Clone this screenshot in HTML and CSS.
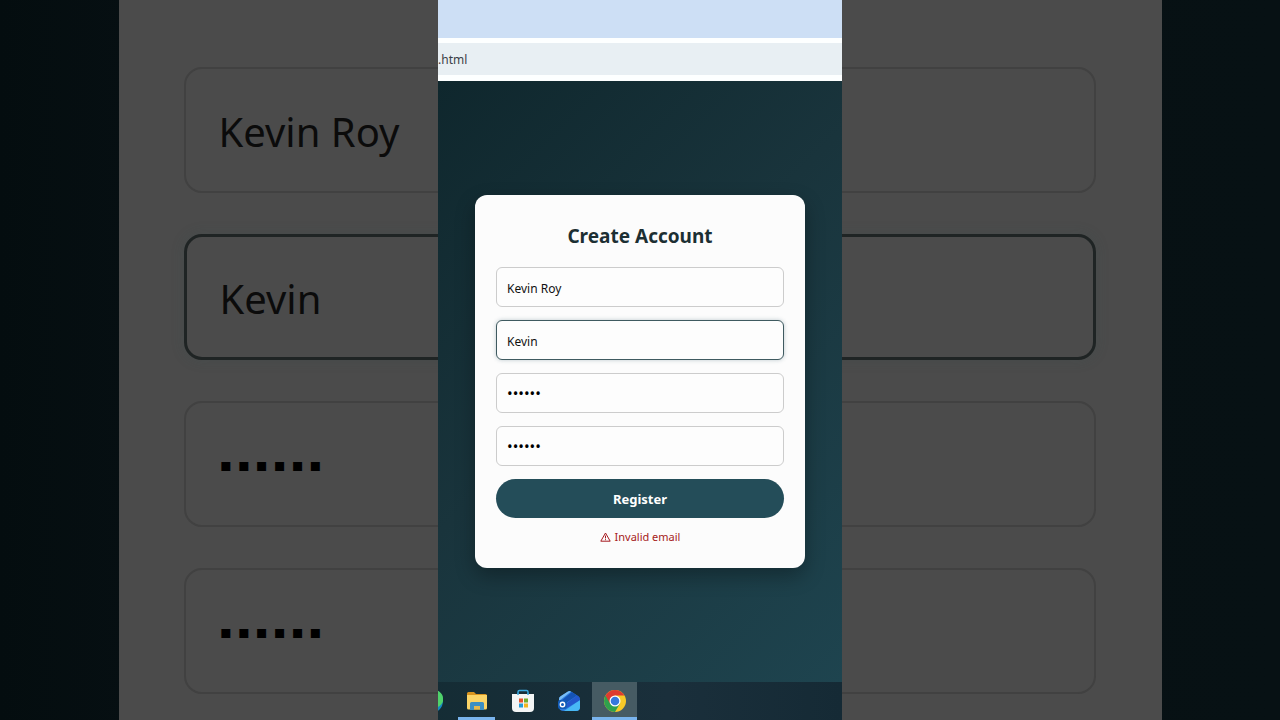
FILE: index.html
```
<!DOCTYPE html>
<html lang="en">
<head>
	<meta charset="UTF-8">
	<title>Create Account</title>
	<link rel="stylesheet" href="styles.css">
</head>
<body>
	<!-- enlarged, dimmed copy of the form -->
	<div class="backdrop" aria-hidden="true">
		<div class="backdrop-card">
			<input class="backdrop-field" type="text" value="Kevin Roy" aria-label="Name" tabindex="-1" readonly>
			<input class="backdrop-field active" type="text" value="Kevin" aria-label="Email" tabindex="-1" readonly>
			<input class="backdrop-field masked" type="text" value="▪ ▪ ▪ ▪ ▪ ▪" aria-label="Password" tabindex="-1" readonly>
			<input class="backdrop-field masked" type="text" value="▪ ▪ ▪ ▪ ▪ ▪" aria-label="Confirm password" tabindex="-1" readonly>
		</div>
	</div>

	<div class="screen">
		<div class="tab-strip"></div>
		<div class="toolbar">
			<div class="address">.html</div>
		</div>

		<main class="page">
			<form class="card">
				<h2>Create Account</h2>
				<input class="field" type="text" value="Kevin Roy" aria-label="Full name">
				<input class="field active" type="text" value="Kevin" aria-label="Email">
				<input class="field password" type="password" value="secret" aria-label="Password">
				<input class="field password" type="password" value="secret" aria-label="Confirm password">
				<button class="register" type="button">Register</button>
				<p class="message">
					<svg width="11" height="10" viewBox="0 0 11 10" fill="none" stroke="currentColor">
						<path d="M5.5 1 10.2 9.2H.8Z M5.5 3.6v2.8 M5.5 7.2v1"/>
					</svg>
					Invalid email
				</p>
			</form>
		</main>

		<nav class="taskbar">
			<button class="task" type="button" aria-label="WhatsApp">
				<svg width="24" height="24" viewBox="0 0 24 24">
					<circle cx="12" cy="12" r="12" fill="#168bc0"/>
					<path d="M0 9a12 9 0 1 1 24 0 12 9 0 0 1-24 3Z" fill="#4fd26b"/>
				</svg>
			</button>
			<button class="task open" type="button" aria-label="File Explorer">
				<svg width="22" height="20" viewBox="0 0 22 20">
					<path d="M1 2.5Q1 1 2.5 1H8l2 2h9.500q1.500 0 1.500 1.500V7H1Z" fill="#d9941f"/>
					<path d="M1 4h20V17q0 1.500-1.500 1.500h-17Q1 18.500 1 17Z" fill="#fbd467"/>
					<path d="M4 19v-6.500Q4 11 5.500 11h11q1.500 0 1.500 1.500V19h-4v-4H8v4Z" fill="#3c8fc4"/>
					<path d="M8 15h6v3.500H8Z" fill="#e5b94f"/>
				</svg>
			</button>
			<button class="task" type="button" aria-label="Microsoft Store">
				<svg width="22" height="24" viewBox="0 0 22 24">
					<path d="M6 7V3q0-1.500 1.500-1.500h7Q16 1.500 16 3v4" fill="none" stroke="#39a9df" stroke-width="1.500"/>
					<path d="M0 5h22v14q0 4-4 4H4q-4 0-4-4Z" fill="#f3f5f5"/>
					<path d="M6 4.500V6M16 4.500V6" stroke="#39a9df" stroke-width="1.500"/>
					<path d="M7 9.500h4v4H7Z" fill="#e5532d"/>
					<path d="M12 9.500h4v4h-4Z" fill="#72ae2c"/>
					<path d="M7 14.500h4v4H7Z" fill="#239bd7"/>
					<path d="M12 14.500h4v4h-4Z" fill="#f2b51f"/>
				</svg>
			</button>
			<button class="task" type="button" aria-label="Outlook">
				<svg width="22" height="22" viewBox="0 0 22 22">
					<path d="M1 9Q1 7 3 6L10 1.500Q11.500.5 13 1.500L20 6q2 1 2 4v7q0 4-4 4H6q-5 0-5-4Z" fill="#2d7de0"/>
					<path d="M1 11V9Q1 7 3 6L10 1.500Q11.500.5 13 1.500Z" fill="#79bdf6"/>
					<path d="M4 10 14 2l5 3.500L8 13Z" fill="#1553b5"/>
					<path d="M22 10v7q0 4-4 4H6Z" fill="#48b9f5"/>
					<path d="M9 13 19 5.500q3 1.500 3 4.500L9 18Z" fill="#2358cc"/>
					<rect x="0" y="10" width="9" height="9" rx="2" fill="#125cb8"/>
					<circle cx="4.500" cy="14.500" r="2.200" fill="none" stroke="#fff" stroke-width="1.400"/>
				</svg>
			</button>
			<button class="task current" type="button" aria-label="Chrome">
				<svg width="24" height="24" viewBox="0 0 24 24">
					<circle cx="12" cy="12" r="11" fill="#f7c928"/>
					<path d="M12 12 2.500 6.500A11 11 0 0 0 12 23l5-8.500Z" fill="#2fa14d"/>
					<path d="M2.500 6.500A11 11 0 0 1 21.500 6.500H12l-5 8Z" fill="#dd3b30"/>
					<circle cx="12" cy="12" r="5.500" fill="#fff"/>
					<circle cx="12" cy="12" r="4.300" fill="#3578dc"/>
				</svg>
			</button>
		</nav>
	</div>
</body>
</html>
```

FILE: styles.css
```
* {
	box-sizing: border-box;
}
body {
	margin: 0;
	height: 100vh;
	display: grid;
	grid-template: 100vh / 100%;
	overflow: hidden;
	background: #050e10;
	font-family: "Noto Sans", "Open Sans", sans-serif;
}
input, button {
	font-family: inherit;
}

/* both layers share the one grid cell */
.backdrop, .screen {
	grid-area: 1 / 1;
}
.backdrop {
	display: flex;
	justify-content: center;
	background: linear-gradient(90deg, #040d0f, #060f12 10%, #071114);
}
.backdrop-card {
	width: 82%;
	max-width: 1043px;
	padding: 67px 66px 0 65px;
	display: flex;
	flex-direction: column;
	gap: 41px;
	background: #4b4b4b;
}
.backdrop-field {
	width: 100%;
	height: 126px;
	flex-shrink: 0;
	padding: 2px 33px 0;
	border: 2px solid #414141;
	border-radius: 18px;
	background: transparent;
	color: #0b0b0b;
	font-size: 40px;
	outline: none;
}
.backdrop-field.active {
	border: 3px solid #1f2424;
	box-shadow: 0 0 14px rgba(50, 80, 80, 0.2);
}
.backdrop-field.masked {
	padding: 0 34px;
	color: #000;
	font-family: "DejaVu Sans", sans-serif;
	font-size: 18px;
}

.screen {
	justify-self: center;
	width: 100%;
	max-width: 404px;
	display: flex;
	flex-direction: column;
	overflow: hidden;
}
.tab-strip {
	height: 38px;
	background: #cddff5;
}
.toolbar {
	padding: 5px 0 6px;
	background: #fdffff;
}
.address {
	height: 32px;
	line-height: 34px;
	background: #e8eff3;
	color: #3b4146;
	font-size: 12px;
}

.page {
	flex: 1;
	display: flex;
	align-items: center;
	justify-content: center;
	background: linear-gradient(135deg, #0f272d, #19343c 45%, #1e444f);
}
.card {
	width: 330px;
	padding: 27px 21px 25px;
	display: flex;
	flex-direction: column;
	gap: 13px;
	border-radius: 12px;
	background: #fcfcfc;
	box-shadow: 0 8px 20px rgba(0, 0, 0, 0.3);
}
.card h2 {
	margin: 0 0 4px;
	color: #1c2f33;
	font-size: 19px;
	line-height: 28px;
	text-align: center;
}
.field {
	width: 100%;
	height: 40px;
	padding: 2px 10px 0;
	border: 1px solid #ccc;
	border-radius: 6px;
	background: #fdfdfd;
	color: #111;
	font-size: 12px;
	outline: none;
}
.field.active {
	border-color: #3f5a60;
	box-shadow: 0 0 4px rgba(44, 83, 100, 0.3);
}
.field.password {
	padding-top: 0;
	color: #000;
	font-size: 15px;
}
.register {
	height: 39px;
	border: none;
	border-radius: 20px;
	background: #244d59;
	color: #fff;
	font-size: 13px;
	font-weight: bold;
	cursor: pointer;
}
.message {
	margin: 0;
	display: flex;
	align-items: center;
	justify-content: center;
	gap: 4px;
	color: #a61b20;
	font-size: 11px;
	line-height: 12px;
}

.taskbar {
	height: 38px;
	display: flex;
	gap: 1px;
	/* first button is partly scrolled out of view */
	margin-left: -30px;
	background: linear-gradient(90deg, #142c34, #1a2f3b 60%, #152a35);
}
.task {
	width: 45px;
	flex-shrink: 0;
	padding: 0;
	display: flex;
	align-items: center;
	justify-content: center;
	border: none;
	background: none;
}
.task.open {
	background: linear-gradient(#79b4ed, #79b4ed) center bottom / 37px 3px no-repeat;
}
.task.current {
	background: #465b63;
	box-shadow: inset 0 -3px #79b4ed;
}
```
